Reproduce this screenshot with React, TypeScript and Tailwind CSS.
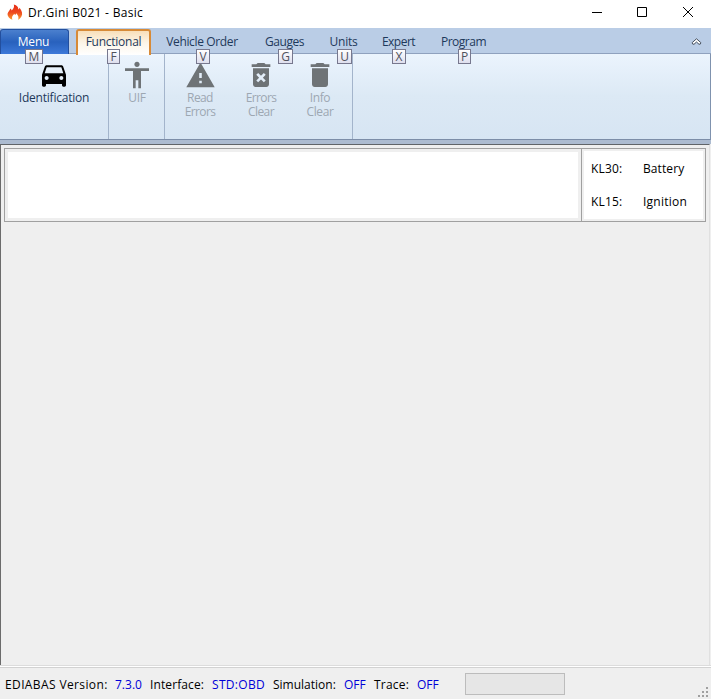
import type { ReactNode } from "react";

const tabs = [
  { label: "Vehicle Order", tip: "V", box: "w-[92px]", text: "tracking-[-0.36px]", tipPos: "left-[40px] w-[14px]" },
  { label: "Gauges", tip: "G", box: "w-[73px]", text: "tracking-[-0.42px]", tipPos: "left-[30px] w-[15px]" },
  { label: "Units", tip: "U", box: "w-[45px]", text: "tracking-[-0.25px]", tipPos: "left-[16px] w-[15px]" },
  { label: "Expert", tip: "X", box: "w-[65px]", text: "tracking-[-0.5px]", tipPos: "left-[26px] w-[14px]" },
  { label: "Program", tip: "P", box: "w-[65px]", text: "tracking-[-0.5px]", tipPos: "left-[27px] w-[13px]" },
];

function KeyTip({ children, className }: { children: ReactNode; className: string }) {
  return (
    <span
      className={`absolute top-[21px] z-10 flex h-[15px] items-center justify-center border border-[#77788e] bg-gradient-to-b from-white to-[#dedfee] text-[12px] leading-none tracking-normal text-[#50525c] ${className}`}
    >
      {children}
    </span>
  );
}

function FlameIcon() {
  return (
    <svg width="16" height="17" viewBox="0 0 16 17" className="shrink-0">
      <path
        d="M6.8 0.6C10 1.3 11.600 3.300 11.300 5.600C12 5.100 12.400 4.500 12.500 3.800C14.900 6.700 16 9.800 14.400 12.600C13.600 14.200 12.300 15.200 11 15.700C12.100 13.600 11.400 11.500 9.200 9.200C8.700 11.200 7.500 11.500 7.600 9.800C5.300 11.200 4.400 13.500 5.400 15.800C2.400 14.700 0.200 12.200 0.600 9.600C1.100 7.400 3 6.500 3.400 4.500C4.200 5 4.600 5.700 4.700 6.500C6.800 4.800 7.600 2.600 6.800 0.600Z"
        fill="url(#flame)"
      />
      <defs>
        <linearGradient id="flame" x1="0" y1="0" x2="0" y2="1">
          <stop offset="0" stopColor="#e52b14" />
          <stop offset="0.5" stopColor="#ee4820" />
          <stop offset="1" stopColor="#fa9b2c" />
        </linearGradient>
      </defs>
    </svg>
  );
}

function Glyph({ d, className }: { d: string; className: string }) {
  return (
    <svg viewBox="0 0 24 24" fill="currentColor" className={className}>
      <path d={d} fillRule="evenodd" />
    </svg>
  );
}

const car =
  "M18.92 5.01C18.72 4.42 18.16 4 17.5 4h-11c-.66 0-1.21.42-1.42 1.01L3 11v8c0 .55.45 1 1 1h1c.55 0 1-.45 1-1v-1h12v1c0 .55.45 1 1 1h1c.55 0 1-.45 1-1v-8l-2.08-5.99zM6.5 15c-.83 0-1.5-.67-1.5-1.5S5.67 12 6.5 12s1.5.67 1.5 1.5S7.33 15 6.5 15zm11 0c-.83 0-1.5-.67-1.5-1.5s.67-1.5 1.5-1.5 1.5.67 1.5 1.5-.67 1.5-1.5 1.5zM5 10l1.5-4.5h11L19 10H5z";
const person =
  "M12 2c1.1 0 2 .9 2 2s-.9 2-2 2-2-.9-2-2 .9-2 2-2zm9 7h-6v13h-2v-6h-2v6H9V9H3V7h18v2z";
const warning = "M1 21h22L12 2 1 21zm12-3h-2v-2h2v2zm0-4h-2v-4h2v4z";
const trash = "M6 19c0 1.1.9 2 2 2h8c1.1 0 2-.9 2-2V7H6v12zM19 4h-3.500l-1-1h-5l-1 1H5v2h14V4z";
const trashX =
  "M6 19c0 1.100.9 2 2 2h8c1.100 0 2-.9 2-2V7H6v12zM8.460 11.880l1.410-1.410L12 12.590l2.120-2.120 1.410 1.410L13.410 14l2.120 2.120-1.410 1.410L12 15.410l-2.120 2.120-1.410-1.410L10.590 14 8.460 11.880zM19 4h-3.500l-1-1h-5l-1 1H5v2h14V4z";

function Tool({ d, icon, lines, box, text }: { d: string; icon: string; lines: string[]; box: string; text: string }) {
  return (
    <div className={`flex flex-col items-center ${box}`}>
      <div className="flex h-9 items-start justify-center">
        <Glyph d={d} className={icon} />
      </div>
      {lines.map((line) => (
        <span key={line} className={`h-[14px] whitespace-nowrap text-[12px] leading-[15px] ${text}`}>
          {line}
        </span>
      ))}
    </div>
  );
}

export default function App() {
  return (
    <div className="flex h-[699px] w-[711px] flex-col overflow-hidden bg-[#efefef] font-['Open_Sans','Noto_Sans',sans-serif] text-[12px] text-black">
      <header className="flex h-[28px] shrink-0 items-start bg-white">
        <div className="flex h-[25px] items-center gap-[5px] pl-[7px]">
          <FlameIcon />
          <span className="whitespace-nowrap text-[12px] tracking-[0.28px]">Dr.Gini B021 - Basic</span>
        </div>
        <svg width="103" height="12" viewBox="0 0 103 12" className="ml-auto mr-[17px] mt-[6px]" fill="none" stroke="#000">
          <path d="M1 6.500h10M46.500 1.500h9v9h-9zM92 1l10 10M102 1L92 11" />
        </svg>
      </header>

      <nav className="flex h-[26px] shrink-0 border-b border-[#8fa1be] bg-[#bacde6] text-[#1e395b]">
        <div className="relative mt-px flex h-[25px] w-[69px] justify-center rounded-t-[3px] border border-b-0 border-[#234f9e] bg-gradient-to-b from-[#4b80ce] via-[#2861bd] to-[#3d79d9] pr-[2px] text-white">
          <span className="leading-[23px] tracking-[-0.2px]">Menu</span>
          <KeyTip className="-left-px ml-[25px] mt-[-2px] w-[18px]">M</KeyTip>
        </div>
        <div className="relative ml-[7px] mt-px flex h-[26px] w-[75px] justify-center rounded-t-[3px] border-2 border-b-0 border-[#d78a37] bg-gradient-to-b from-[#f8dfba] via-[#fcf5e8] to-white">
          <span className="leading-[22px] tracking-[-0.25px]">Functional</span>
          <KeyTip className="left-[29px] mt-[-3px] w-[13px]">F</KeyTip>
        </div>
        <div className="ml-[5px] flex">
          {tabs.map((t) => (
            <div key={t.label} className={`relative flex justify-center ${t.box}`}>
              <span className={`whitespace-nowrap leading-[27px] ${t.text}`}>{t.label}</span>
              <KeyTip className={t.tipPos}>{t.tip}</KeyTip>
            </div>
          ))}
        </div>
        <svg width="11" height="8" viewBox="0 0 11 8" className="ml-auto mr-[9px] mt-[10px]">
          <path d="M5.500 .8L1.200 4.600Q1 6.500 3 6.300L5.500 4L8 6.300Q10 6.500 9.800 4.600Z" fill="#fff" stroke="#444e5c" strokeLinejoin="round" />
        </svg>
      </nav>

      <section className="flex h-[86px] shrink-0 border-b border-r border-b-[#7c8da8] border-r-[#7f92ae] bg-gradient-to-b from-[#ebf4fd] via-[#dce9f5] to-[#d7e5f3] text-[#1e395b]">
        <div className="flex w-[109px] border-r border-[#a3b4cb]">
          <Tool d={car} icon="mt-[6px] size-8 text-black" lines={["Identification"]} box="w-[108px]" text="tracking-[-0.22px]" />
        </div>
        <div className="flex w-[56px] border-r border-[#a3b4cb] text-[#9da7b2]">
          <Tool d={person} icon="mt-[5px] size-8 text-[#6e7376]" lines={["UIF"]} box="ml-[1px] w-[56px]" text="tracking-[-0.2px]" />
        </div>
        <div className="flex w-[188px] border-r border-[#a3b4cb] text-[#9da7b2]">
          <Tool d={warning} icon="mt-[6px] size-[31px] text-[#6e7376]" lines={["Read", "Errors"]} box="ml-[5px] w-[60px]" text="tracking-[-0.6px]" />
          <Tool d={trashX} icon="mt-[5px] size-8 text-[#6e7376]" lines={["Errors", "Clear"]} box="w-[62px]" text="tracking-[-0.6px]" />
          <Tool d={trash} icon="mt-[5px] size-8 text-[#6e7376]" lines={["Info", "Clear"]} box="w-[56px]" text="tracking-[-0.4px]" />
        </div>
      </section>

      <div className="h-[4px] shrink-0 bg-[#acbbd0]" />

      <main className="mr-px h-[521px] shrink-0 border-l border-r border-t border-l-[#6b6b6b] border-r-[#e0e0e0] border-t-[#606468] pl-[3px] pr-[3px] pt-[3px]">
        <div className="flex h-[74px] border border-[#a0a0a0]">
          <div className="w-[577px] border-r border-[#a0a0a0] p-[3px]">
            <div className="h-full bg-white" />
          </div>
          <div className="flex-1 p-[2px]">
            <div className="grid h-full grid-cols-[52px_1fr] grid-rows-[33px_33px] bg-white pl-[7px] pt-[1px]">
              <span className="leading-[34px] tracking-[0.15px]">KL30:</span>
              <span className="leading-[34px] tracking-[0.1px]">Battery</span>
              <span className="leading-[34px] tracking-[0.15px]">KL15:</span>
              <span className="leading-[34px] tracking-[0.25px]">Ignition</span>
            </div>
          </div>
        </div>
      </main>

      <footer className="relative flex flex-1 items-start border-t border-[#dcdcdc] pl-[5px] shadow-[inset_0_1px_0_#ffffff,inset_0_2px_0_#d2d2d2]">
        <div className="flex whitespace-nowrap pt-[9px] leading-[20px]">
          <span className="w-[110px] tracking-[0.38px]">EDIABAS Version:</span>
          <span className="w-[35px] text-[#0000d8]">7.3.0</span>
          <span className="w-[62px] tracking-[0.1px]">Interface:</span>
          <span className="w-[61px] tracking-[0.3px] text-[#0000d8]">STD:OBD</span>
          <span className="w-[71px]">Simulation:</span>
          <span className="w-[30px] text-[#0000d8]">OFF</span>
          <span className="w-[43px] tracking-[0.2px]">Trace:</span>
          <span className="w-[43px] text-[#0000d8]">OFF</span>
        </div>
        <div className="ml-[5px] mt-[7px] h-[22px] w-[100px] border border-[#bcbcbc] bg-[#e6e6e6]" />
        <svg width="12" height="12" viewBox="0 0 12 12" className="ml-auto mr-px self-end" fill="#a0a0a0">
          <path d="M8 0h2v2h-2zM4 4h2v2h-2zM8 4h2v2h-2zM0 8h2v2h-2zM4 8h2v2h-2zM8 8h2v2h-2z" />
        </svg>
      </footer>
    </div>
  );
}
